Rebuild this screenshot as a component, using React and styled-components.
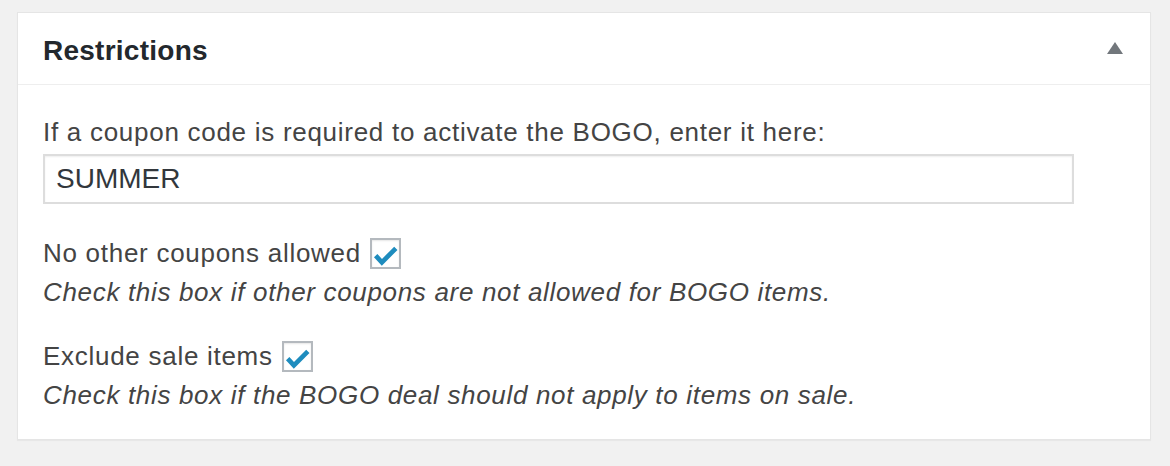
import React from 'react'
import styled, { createGlobalStyle } from 'styled-components'

const GlobalStyle = createGlobalStyle`
  html, body {
    margin: 0;
    padding: 0;
    background: #f1f1f1;
  }
  body {
    font-family: "Liberation Sans", Arial, sans-serif;
    color: #444;
  }
`

const Page = styled.div`
  padding: 12px 0 0 17px;
  height: 466px;
  box-sizing: border-box;
`

const Card = styled.div`
  width: 1134px;
  box-sizing: border-box;
  background: #fff;
  border: 1px solid #e5e5e5;
  box-shadow: 0 1px 1px rgba(0, 0, 0, 0.04);
`

const Header = styled.div`
  height: 72px;
  box-sizing: border-box;
  padding: 4px 27px 0 25px;
  display: flex;
  align-items: center;
  justify-content: space-between;
  border-bottom: 1px solid #eee;
`

const Title = styled.h2`
  margin: 0;
  font-size: 28px;
  font-weight: 700;
  letter-spacing: 0.25px;
  color: #23282d;
`

const Toggle = styled.svg`
  width: 16px;
  height: 12px;
  margin-top: -6px;
  fill: #72777c;
`

const Body = styled.div`
  padding: 28px 25px 25px;
`

const Label = styled.div`
  font-size: 26px;
  line-height: 39px;
  letter-spacing: 0.72px;
`

const TextInput = styled.input`
  display: block;
  width: 1031px;
  height: 50px;
  margin-top: 2px;
  box-sizing: border-box;
  border: 2px solid #ddd;
  box-shadow: inset 0 1px 2px rgba(0, 0, 0, 0.07);
  padding: 0 11px;
  font-family: "Liberation Sans", Arial, sans-serif;
  font-size: 28px;
  color: #32373c;
  background: #fff;
  outline: none;
`

const Field = styled.div`
  margin-top: ${p => p.$top}px;
`

const CheckRow = styled.label`
  display: flex;
  align-items: center;
  font-size: 26px;
  line-height: 39px;
  letter-spacing: 0.72px;
`

const Box = styled.span`
  width: 31px;
  height: 31px;
  margin-left: 9px;
  margin-top: -1px;
  box-sizing: border-box;
  border: 2px solid #b4b9be;
  box-shadow: inset 0 1px 2px rgba(0, 0, 0, 0.1);
  background: #fff;
  display: flex;
  align-items: center;
  justify-content: center;
`

const Desc = styled.div`
  font-size: 26px;
  line-height: 38px;
  font-style: italic;
  letter-spacing: 0.67px;
`

const Check = () => (
  <svg width="31" height="31" viewBox="0 0 30 30" style={{ margin: -2 }}>
    <polyline
      points="5.5,17 11.5,23.5 25,10"
      fill="none"
      stroke="#1e8cbe"
      strokeWidth="4.5"
      strokeLinejoin="miter"
    />
  </svg>
)

const Option = ({ label, desc, top }) => (
  <Field $top={top}>
    <CheckRow>
      {label}
      <Box>
        <Check />
      </Box>
    </CheckRow>
    <Desc>{desc}</Desc>
  </Field>
)

export default function App() {
  return (
    <>
      <GlobalStyle />
      <Page>
        <Card>
          <Header>
            <Title>Restrictions</Title>
            <Toggle viewBox="0 0 16 12">
              <polygon points="8,0 16,12 0,12" />
            </Toggle>
          </Header>
          <Body>
            <Label>If a coupon code is required to activate the BOGO, enter it here:</Label>
            <TextInput defaultValue="SUMMER" />
            <Option
              top={30}
              label="No other coupons allowed"
              desc="Check this box if other coupons are not allowed for BOGO items."
            />
            <Option
              top={26}
              label="Exclude sale items"
              desc="Check this box if the BOGO deal should not apply to items on sale."
            />
          </Body>
        </Card>
      </Page>
    </>
  )
}
